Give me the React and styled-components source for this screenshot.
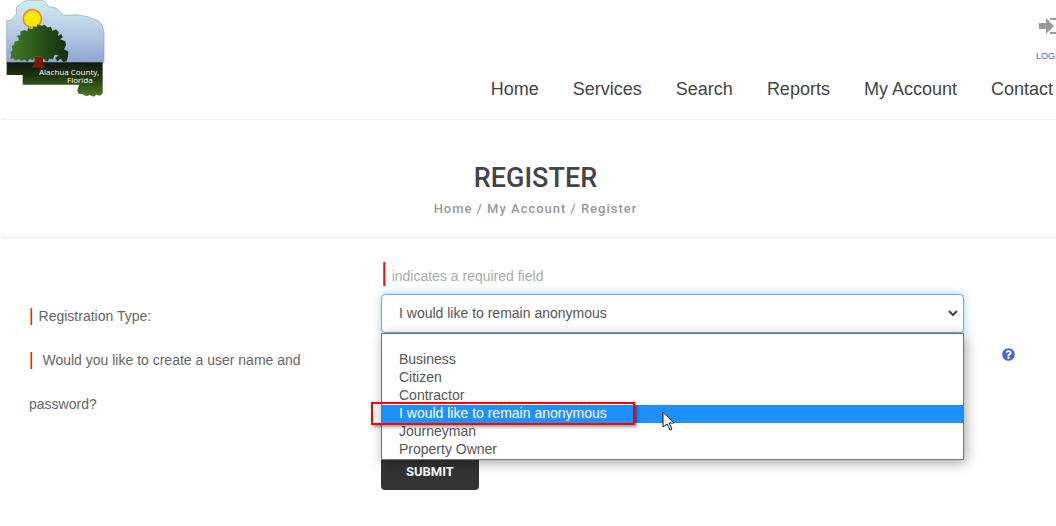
import React, { useState } from 'react';
import styled, { createGlobalStyle, css } from 'styled-components';
import { FaQuestionCircle } from 'react-icons/fa';

const navLinks = ['Home', 'Services', 'Search', 'Reports', 'My Account', 'Contact'];

const registrationTypes = [
  '',
  'Business',
  'Citizen',
  'Contractor',
  'I would like to remain anonymous',
  'Journeyman',
  'Property Owner',
];

const Logo = () => (
  <StyledLogo viewBox="0 0 330 300" role="img" aria-label="Alachua County, Florida">
    <defs>
      <linearGradient id="sky" x1="0" y1="0" x2="0" y2="1">
        <stop offset="0" stopColor="#cfeef2" />
        <stop offset="0.5" stopColor="#b7cbe4" />
        <stop offset="1" stopColor="#8ea3d2" />
      </linearGradient>
      <linearGradient id="ground" x1="0" y1="0" x2="0" y2="1">
        <stop offset="0" stopColor="#10180f" />
        <stop offset="0.4" stopColor="#1f3411" />
        <stop offset="1" stopColor="#4c7a1e" />
      </linearGradient>
      <linearGradient id="leaves" x1="0" y1="0" x2="1" y2="0">
        <stop offset="0" stopColor="#3f7d22" />
        <stop offset="0.45" stopColor="#2c5a1c" />
        <stop offset="1" stopColor="#172a10" />
      </linearGradient>
    </defs>
    <path
      d="M20 188V62l14-2 9-10 6-7V22l17-14L84 1h42l12 6 8 14 22 3 12 10 12 12 17-1 20-1 10 2 22 3 18 8 18 6 10 14 5 18v92z"
      fill="url(#sky)"
      stroke="#9aa7a8"
      strokeWidth="2"
    />
    <path
      d="M20 187h288v93l-8 7-11-3-8 6-12-5-10 4-12-7-12-1-3-12 5-13v-2H68v-29H20z"
      fill="url(#ground)"
    />
    <circle cx="97" cy="56" r="27" fill="#f6ee00" stroke="#ff8126" strokeWidth="5" />
    <path
      d="M31 178L34 165L31 158L38 148L35 138L44 133L42 125L56 122L55 112L48 108L62 105L60 95L74 90L82 94L84 84L98 88L100 79L110 82L112 73L124 77L134 74L142 82L153 80L157 92L168 88L176 97L174 108L184 102L188 112L180 118L196 124L198 136L192 148L205 155L204 168L200 184L190 186L182 176L172 184L166 174L176 166L164 164L158 178L148 176L142 186L131 178L126 170L106 170L98 181L90 176L82 186L74 179L64 183L56 178L46 182L40 175z"
      fill="url(#leaves)"
    />
    <path d="M104 170h24l2 20 5 13H94l9-13z" fill="#741d08" />
    <text x="298" y="225" textAnchor="end">Alachua County,</text>
    <text x="278" y="249" textAnchor="end">Florida</text>
  </StyledLogo>
);

const LoginIcon = () => (
  <svg width="24" height="18" viewBox="0 0 24 18" aria-hidden="true">
    <path d="M1 6h7V1l8 8-8 8v-5H1z" fill="#999" />
    <path d="M12 2h10v14H12" fill="none" stroke="#999" strokeWidth="2" />
  </svg>
);

const App = () => {
  const [type, setType] = useState('I would like to remain anonymous');

  return (
    <>
      <GlobalStyle />
      <Viewport>
        <Page>
          <Header>
            <Logo />
            <HeaderSide>
              <LoginLink href="#login">
                <LoginIcon />
                LOGIN
              </LoginLink>
              <Nav>
                {navLinks.map((link) => (
                  <NavLink key={link} href="#">{link}</NavLink>
                ))}
              </Nav>
            </HeaderSide>
          </Header>

          <TitleBar>
            <Title>REGISTER</Title>
            <Breadcrumb>Home / My Account / Register</Breadcrumb>
          </TitleBar>

          <Form onSubmit={(e) => e.preventDefault()}>
            <Hint><Bar $large>|</Bar> indicates a required field</Hint>

            <Label htmlFor="type"><Bar>|</Bar> Registration Type:</Label>
            <SelectWrap>
              <Select id="type" value={type} onChange={(e) => setType(e.target.value)}>
                {registrationTypes.map((t) => (
                  <option key={t} value={t}>{t}</option>
                ))}
              </Select>
              <Chevron viewBox="0 0 10 8" aria-hidden="true">
                <path d="M1 2l4 4 4-4" fill="none" stroke="#444" strokeWidth="2" />
              </Chevron>
              <Menu role="listbox" aria-label="Registration Type">
                {registrationTypes.map((t) => (
                  <Option
                    key={t}
                    role="option"
                    aria-selected={t === type}
                    $active={t === type}
                    onClick={() => setType(t)}
                  >
                    {t}
                    {t === type && <Marker />}
                    {t === type && (
                      <Pointer viewBox="0 0 13 20" aria-hidden="true">
                        <path d="M1 1v15l4-3 3 6 2-1-3-6h5z" fill="#fff" stroke="#111" />
                      </Pointer>
                    )}
                  </Option>
                ))}
              </Menu>
            </SelectWrap>

            <Label as="p"><Bar>|</Bar>{' \u00a0'}Would you like to create a user name and password?</Label>
            <Help type="button" aria-label="Help"><FaQuestionCircle size={13} /></Help>

            <Submit type="submit">SUBMIT</Submit>
          </Form>
        </Page>
      </Viewport>
    </>
  );
};

const GlobalStyle = createGlobalStyle`
  * {
    box-sizing: border-box;
  }
  body {
    margin: 0;
    background: #fff;
    color: #555;
    font-family: "Liberation Sans", Arial, sans-serif;
    font-size: 14px;
  }
`;

const Viewport = styled.div`
  overflow: hidden;
  min-height: 100vh;
`;

/* the page runs a little past the right edge of the window */
const Page = styled.div`
  margin: 0 -13px 0 2px;
`;

const Header = styled.header`
  display: flex;
  justify-content: space-between;
  height: 120px;
  border-bottom: 1px solid #eee;
`;

const StyledLogo = styled.svg`
  width: 110px;
  height: 100px;
  margin-left: -2px;

  text {
    font-family: "Open Sans", sans-serif;
    font-size: 24px;
    fill: #fff;
  }
`;

const HeaderSide = styled.div`
  display: flex;
  flex-direction: column;
  align-items: flex-end;
  padding: 17px 16px 0 0;
`;

const LoginLink = styled.a`
  display: flex;
  flex-direction: column;
  align-items: center;
  gap: 14px;
  margin-right: -11px;
  color: #4a66cc;
  font-size: 9px;
  line-height: 14px;
  text-decoration: none;
`;

const Nav = styled.nav`
  display: flex;
  gap: 34px;
  margin-top: 16px;
`;

const NavLink = styled.a`
  color: #444;
  font-size: 18px;
  line-height: 20px;
  text-decoration: none;
`;

const TitleBar = styled.section`
  padding: 40px 0 19px;
  border-bottom: 1px solid #eee;
  text-align: center;
  font-family: Roboto, sans-serif;
`;

const Title = styled.h1`
  margin: 0;
  color: #444;
  font-size: 27px;
  font-weight: 500;
  line-height: 36px;
`;

const Breadcrumb = styled.p`
  margin: 4px 0 0;
  color: #999;
  font-size: 13px;
  font-weight: 500;
  letter-spacing: 1px;
  line-height: 18px;
`;

const Form = styled.form`
  display: grid;
  grid-template-columns: 352px minmax(0, 1fr) 105px;
  align-items: start;
  padding: 20px 0 0 27px;
`;

const Hint = styled.p`
  grid-column: 2;
  margin: 0;
  color: #aaa;
  line-height: 36px;
`;

const Bar = styled.span`
  margin-right: ${(props) => (props.$large ? '0' : '1px')};
  color: #e81010;
  font-size: ${(props) => (props.$large ? '26px' : '18px')};
  line-height: 1;
`;

const Label = styled.label`
  grid-column: 1;
  max-width: 300px;
  margin: 0;
  color: #666;
  line-height: 44px;
`;

const SelectWrap = styled.div`
  position: relative;
`;

const Select = styled.select`
  display: block;
  width: 100%;
  height: 39px;
  padding: 0 17px 2px;
  appearance: none;
  border: 1px solid #66afe9;
  border-radius: 4px;
  outline: none;
  background: #fff;
  box-shadow: 0 0 8px rgba(102, 175, 233, 0.6);
  color: #555;
  font-family: inherit;
  font-size: 14px;
`;

const Chevron = styled.svg`
  position: absolute;
  top: 15px;
  right: 6px;
  width: 10px;
  height: 8px;
  pointer-events: none;
`;

const Menu = styled.ul`
  position: absolute;
  z-index: 1;
  top: 39px;
  left: 0;
  right: 0;
  margin: 0;
  padding: 0;
  border: 1px solid #767676;
  background: #fff;
  box-shadow: 2px 3px 12px rgba(0, 0, 0, 0.35);
  list-style: none;
`;

const Option = styled.li`
  position: relative;
  height: 18px;
  padding: 0 17px;
  line-height: 16px;

  &:first-child {
    height: 17px;
  }

  ${(props) => props.$active && css`
    z-index: 1;
    background: #1e90ff;
    color: #fff;
  `}
`;

const Marker = styled.span`
  position: absolute;
  top: -3px;
  left: -11px;
  width: 264px;
  height: 23px;
  border: 2px solid #f00;
  box-shadow: 2px 2px 3px rgba(0, 0, 0, 0.4);
`;

const Pointer = styled.svg`
  position: absolute;
  top: 6px;
  left: 280px;
  width: 13px;
  height: 20px;
`;

const Help = styled.button`
  grid-column: 3;
  margin: 0 0 0 38px;
  padding: 10px 0;
  border: 0;
  background: none;
  color: #4a66cc;
  line-height: 1;
  text-align: left;
`;

const Submit = styled.button`
  grid-column: 2;
  justify-self: start;
  height: 38px;
  margin-top: 26px;
  padding: 0 25px;
  border: 0;
  border-radius: 4px;
  background: #333;
  color: #fff;
  font-family: Roboto, sans-serif;
  font-size: 13px;
  font-weight: 700;
`;

export default App;
